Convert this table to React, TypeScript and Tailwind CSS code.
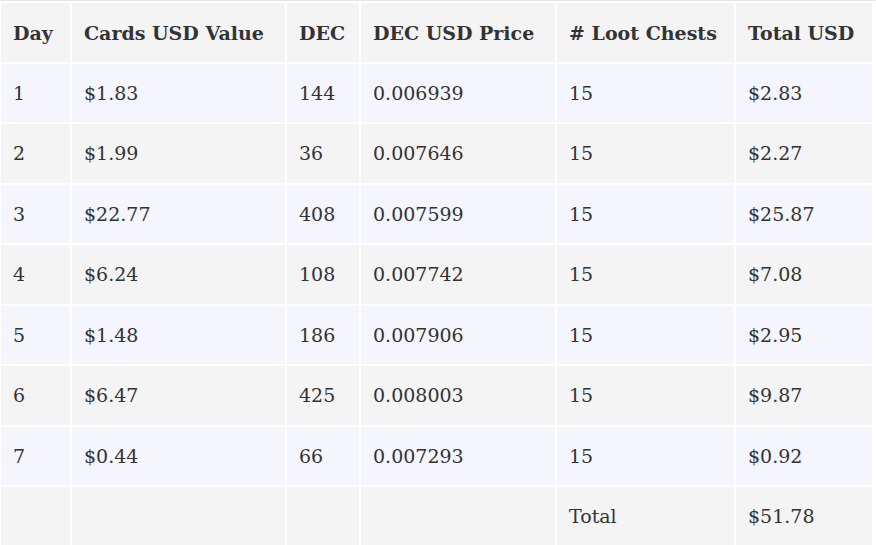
import React from "react";

const headers = ["Day", "Cards USD Value", "DEC", "DEC USD Price", "# Loot Chests", "Total USD"];
const rows: string[][] = [
  ["1", "$1.83", "144", "0.006939", "15", "$2.83"],
  ["2", "$1.99", "36", "0.007646", "15", "$2.27"],
  ["3", "$22.77", "408", "0.007599", "15", "$25.87"],
  ["4", "$6.24", "108", "0.007742", "15", "$7.08"],
  ["5", "$1.48", "186", "0.007906", "15", "$2.95"],
  ["6", "$6.47", "425", "0.008003", "15", "$9.87"],
  ["7", "$0.44", "66", "0.007293", "15", "$0.92"],
  ["", "", "", "", "Total", "$51.78"],
];

export default function App() {
  return (
    <div className="w-[876px] h-[545px] overflow-hidden bg-white" style={{ fontFamily: '"DejaVu Serif", serif' }}>
      <div className="h-px bg-[#e6e6e6]" />
      <div className="pt-[2px] pl-px">
        <div className="grid grid-cols-[69px_213px_72px_194px_177px_136px] gap-[2px] text-[19px] text-[#333333]">
          {headers.map((h) => (
            <div key={h} className="h-[58.5px] flex items-center pl-[12px] pt-[2px] bg-[#f4f4f4] font-bold whitespace-nowrap">
              {h}
            </div>
          ))}
          {rows.map((r, i) =>
            r.map((c, j) => (
              <div
                key={`${i}-${j}`}
                className={`h-[58.5px] flex items-center pl-[12px] whitespace-nowrap ${i % 2 === 0 ? "bg-[#f4f5fd]" : "bg-[#f4f4f4]"}`}
              >
                {c}
              </div>
            ))
          )}
        </div>
      </div>
    </div>
  );
}
